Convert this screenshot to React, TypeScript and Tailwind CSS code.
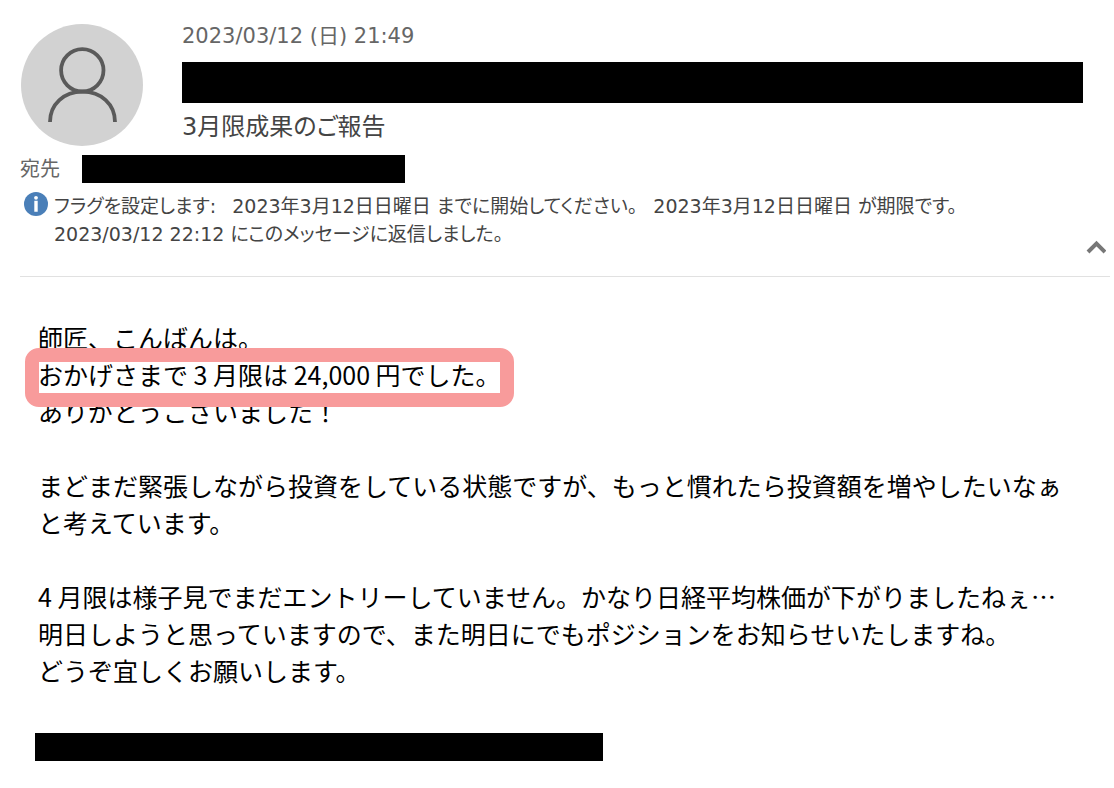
import type { ReactNode } from 'react'

type RedactedProps = {
  label: string
  className: string
}

function Redacted({ label, className }: RedactedProps) {
  return <div role="img" aria-label={label} className={`max-w-full bg-black ${className}`} />
}

function Avatar() {
  return (
    <svg viewBox="0 0 122 122" className="mt-1 size-[122px] shrink-0" fill="none" aria-hidden>
      <circle cx="61" cy="61" r="61" fill="#d2d2d2" />
      <g stroke="#5a5a5a" strokeWidth="3.8">
        <circle cx="61.3" cy="46.3" r="21.2" />
        <path d="M29 98C29 80 43 67.6 61.5 67.6S94 80 94 98" />
      </g>
    </svg>
  )
}

function InfoIcon() {
  return (
    <svg viewBox="0 0 24 24" className="size-6 shrink-0" aria-hidden>
      <circle cx="12" cy="12" r="12" fill="#4a7fb8" />
      <circle cx="12" cy="5.8" r="1.9" fill="#fff" />
      <path d="M10.3 8.8h3.4v10.9h-3.4z" fill="#fff" />
    </svg>
  )
}

function Highlight({ children }: { children: ReactNode }) {
  return (
    <span className="relative inline-block">
      {children}
      <span className="pointer-events-none absolute -top-2 -left-[13px] h-[59px] w-[489px] rounded-[14px] border-14 border-[#f89b9b]" />
    </span>
  )
}

function MessageHeader() {
  return (
    <header className="ml-5 mr-1 border-b border-[#e1e1e1] pt-5 pb-[19px] font-['DejaVu_Sans','Noto_Sans_CJK_JP',sans-serif] text-[#444]">
      <div className="flex gap-[39px] pl-px">
        <Avatar />
        <div className="min-w-0 flex-1 pr-[27px]">
          <time dateTime="2023-03-12T21:49" className="block text-[21px] leading-8 text-[#666]">
            2023/03/12 (日) 21:49
          </time>
          <Redacted label="差出人" className="mt-2.5 h-[41px]" />
          <h1 className="text-2xl leading-[48px] [font-feature-settings:'palt']">3月限成果のご報告</h1>
        </div>
      </div>

      <div className="mt-1 flex items-center gap-[22px]">
        <span className="text-xl leading-7 text-[#666]">宛先</span>
        <Redacted label="受信者" className="h-7 w-[323px]" />
      </div>

      <div className="mt-[9px] flex justify-between">
        <div className="flex gap-1.5 pl-1 pb-[9px]">
          <InfoIcon />
          <div className="text-[19px] leading-7 [font-feature-settings:'palt']">
            <p className="flex flex-wrap gap-x-4">
              <span>フラグを設定します:</span>
              <span>2023年3月12日日曜日 までに開始してください。</span>
              <span>2023年3月12日日曜日 が期限です。</span>
            </p>
            <p>2023/03/12 22:12 にこのメッセージに返信しました。</p>
          </div>
        </div>
        <button type="button" aria-label="ヘッダーを折りたたむ" className="mr-1 self-end">
          <svg viewBox="0 0 20 20" className="size-5" fill="none" stroke="#777" strokeWidth="4" aria-hidden>
            <path d="M2 15L10.5 6.5L19 15" />
          </svg>
        </button>
      </div>
    </header>
  )
}

export default function App() {
  return (
    <div lang="ja" className="min-h-screen bg-white">
      <MessageHeader />
      <main className="pt-[42px] pr-5 pb-7 pl-[35px] font-['Noto_Sans_CJK_JP',sans-serif] text-[25px] leading-[37px] text-black">
        <div className="space-y-[37px] pl-[3px]">
          <p>
            師匠、こんばんは。
            <br />
            <Highlight>おかげさまで 3 月限は 24,000 円でした。</Highlight>
            <br />
            ありがとうございました！
          </p>
          <p>
            まどまだ緊張しながら投資をしている状態ですが、もっと慣れたら投資額を増やしたいなぁ
            <br />
            と考えています。
          </p>
          <p>
            4 月限は様子見でまだエントリーしていません。かなり日経平均株価が下がりましたねぇ…
            <br />
            明日しようと思っていますので、また明日にでもポジションをお知らせいたしますね。
            <br />
            どうぞ宜しくお願いします。
          </p>
        </div>
        <Redacted label="署名" className="mt-11 h-7 w-[568px]" />
      </main>
    </div>
  )
}
